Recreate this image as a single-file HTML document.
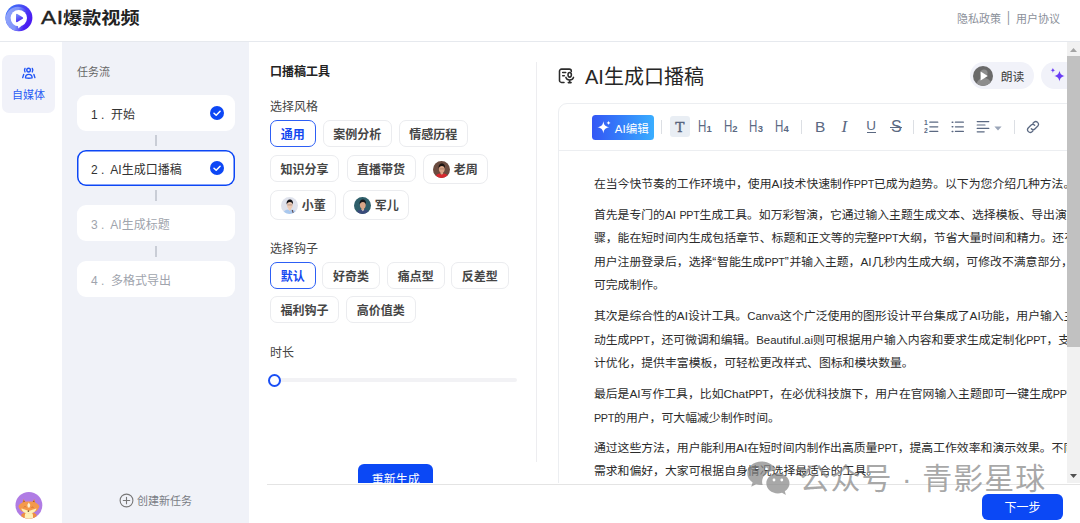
<!DOCTYPE html>
<html lang="zh-CN">
<head>
<meta charset="utf-8">
<title>AI爆款视频</title>
<style>
*{box-sizing:border-box;margin:0;padding:0}
html,body{width:1080px;height:523px;overflow:hidden;background:#fff}
body{position:relative;font-family:"Liberation Sans","Noto Sans CJK SC",sans-serif;color:#333;font-size:12px}
.abs{position:absolute}
.t{position:absolute;white-space:nowrap;line-height:1}
/* header */
#hdr{position:absolute;left:0;top:0;width:1080px;height:42px;background:#fff;border-bottom:1px solid #e6e9ee}
#brand{left:40.5px;top:8px;font-size:16.5px;font-weight:700;color:#222;line-height:20px}
#brand .ai{display:inline-block;font-weight:400;-webkit-text-stroke:.35px #222;font-size:17.5px;transform:scaleX(1.3);transform-origin:0 50%;width:22.5px;letter-spacing:.5px}
#brand .cn{display:inline-block;transform:scaleX(1.16);transform-origin:0 50%}
#links{right:20px;top:13px;font-size:11px;color:#8b909a;line-height:12px}
/* left rail */
#rail{position:absolute;left:0;top:42px;width:62px;height:481px;background:#fff}
#tab{position:absolute;left:2px;top:55px;width:53px;height:58px;background:#f1f2f9;border-radius:7px}
#tabtxt{left:2px;width:53px;text-align:center;top:89px;font-size:11px;color:#2b5df5;line-height:12px}
/* task panel */
#tasks{position:absolute;left:62px;top:42px;width:187px;height:481px;background:#f0f2f8}
.task{position:absolute;left:77px;width:158px;height:36px;background:#fff;border-radius:9px;font-size:12px;line-height:40px;padding-left:14px;color:#333;white-space:nowrap}
.task.cur{box-shadow:inset 0 0 0 1.5px #0d47f5}
.task.dim{color:#a0a4ad}
.conn{position:absolute;left:155px;width:2px;height:11px;background:#c9cdd6}
.chk{position:absolute;width:14px;height:14px}
/* tool panel */
#tool{position:absolute;left:249px;top:42px;width:288px;height:481px;background:#fff}
.lbl{font-size:12px;color:#444;line-height:14px}
.chip{position:absolute;height:27px;overflow:visible;border:1px solid #ebecef;border-radius:7px;background:#fff;font-size:12px;font-weight:700;color:#454545;line-height:29px;text-align:center;white-space:nowrap}
.chip.sel{border-color:#2d5ff5;color:#1448f0}
.chip.av{height:29.5px;line-height:29px;text-align:left;border-radius:8px}
.chip.av svg{position:absolute;left:9.500px;top:5.800px;width:17px;height:17px}
.chip.av span{position:absolute;left:30.300px;top:.6px}
/* editor */
#card{position:absolute;left:558px;top:103px;width:540px;height:420px;border:1px solid #eceef1;border-radius:9px 0 0 0;background:#fff}
.para{position:absolute;left:593.9px;font-size:11.85px;color:#2b2b2b;white-space:nowrap;line-height:23.6px}
.lp{font-size:10.8px;letter-spacing:-.27px}.lq{letter-spacing:.8px}.la{font-size:11.8px}.lc{font-size:11.4px;letter-spacing:0}.lb{font-size:11.4px;letter-spacing:.04px}
.tb{position:absolute;color:#5b6982}
.hh{top:119.400px;font-size:15.600px;line-height:16px}
.hh b{display:inline-block;font-weight:400;transform:scaleX(.74);transform-origin:0 50%;width:9.200px}
.hh sub{font-size:9.500px;vertical-align:baseline;font-weight:700;margin-left:-.8px}
.sep{position:absolute;width:1px;height:14px;top:120px;background:#dcdfe4}
/* scrollbar */
#sb{position:absolute;left:1067px;top:42px;width:13px;height:442px;background:#f1f1f1}
#sbthumb{position:absolute;left:0;top:14px;width:13px;height:290.500px;background:#c1c1c1}
/* footer */
#foot{position:absolute;left:267px;top:483px;width:813px;height:40px;background:#fff;box-shadow:inset 0 1px 0 #fff,inset 0 2px 0 #e4e4e4}
#next{position:absolute;left:982px;top:494px;width:81px;height:26px;border-radius:6px;background:#0b48f5;color:#fff;font-size:12px;text-align:center;line-height:28.500px}
#regen{position:absolute;left:358.300px;top:464px;width:74.800px;height:30px;border-radius:6px;background:#0b48f5;color:#fff;font-size:12px;text-align:center;line-height:33px}
#wm{position:absolute;left:799.500px;top:461.500px;font-size:30px;color:rgba(135,135,135,.72);white-space:nowrap;line-height:34px;letter-spacing:1px;font-weight:400}
</style>
</head>
<body>
<!-- HEADER -->
<div id="hdr"></div>
<svg class="abs" style="left:5px;top:4px" width="28" height="28" viewBox="0 0 28 28">
  <defs>
    <linearGradient id="lg1" x1="0.1" y1="0.1" x2="0.9" y2="0.6"><stop offset="0" stop-color="#3f74f8"/><stop offset="0.5" stop-color="#4748f5"/><stop offset="1" stop-color="#4b1cf2"/></linearGradient>
    <linearGradient id="lg3" x1="0" y1="0.4" x2="1" y2="0.6"><stop offset="0" stop-color="#8fa3fb"/><stop offset="0.45" stop-color="#8094f9"/><stop offset="0.8" stop-color="#6f7af8" stop-opacity="0"/></linearGradient>
    <linearGradient id="lg2" x1="0.2" y1="0" x2="0.6" y2="1"><stop offset="0" stop-color="#7386f9"/><stop offset="1" stop-color="#4527f3"/></linearGradient>
    <clipPath id="lgc"><circle cx="13.900" cy="13.800" r="13.500"/></clipPath>
  </defs>
  <circle cx="13.900" cy="13.800" r="13.500" fill="url(#lg1)"/>
  <g clip-path="url(#lgc)"><circle cx="12.800" cy="14.900" r="12.200" fill="url(#lg3)"/></g>
  <circle cx="13.800" cy="14.100" r="8.200" fill="#fff"/>
  <path d="M13 22.100l0.300 2.500l3-2.600z" fill="#fff"/>
  <path d="M11.900 10.800v6.500l5.300-3.250z" fill="url(#lg2)" stroke="url(#lg2)" stroke-width="1.800" stroke-linejoin="round"/>
</svg>
<div id="brand" class="t"><span class="ai">AI</span><span class="cn">爆款视频</span></div>
<div id="links" class="t">隐私政策 &nbsp;<span style="display:inline-block;transform:scaleY(1.25) translateY(-1.3px)">|</span>&nbsp; 用户协议</div>

<!-- LEFT RAIL -->
<div id="rail"></div>
<div id="tab"></div>
<svg class="abs" style="left:21px;top:66px" width="15" height="14" viewBox="0 0 15 14" fill="none" stroke="#2457f5" stroke-width="1.400" stroke-linecap="round" stroke-linejoin="round">
  <circle cx="7.600" cy="4.100" r="1.850"/>
  <path d="M4 2.400c-0.650 1.050-0.650 2.450 0 3.500M11.300 2.400c0.650 1.050 0.650 2.450 0 3.500"/>
  <path d="M4.500 11.800c0-2.300 1.500-3.400 3.300-3.400s3.300 1.100 3.300 3.400c-2.100 0.600-4.500 0.600-6.600 0z"/>
  <path d="M2.700 8.500L1.700 11.600M12.900 8.500L13.900 11.600"/>
</svg>
<div id="tabtxt" class="t">自媒体</div>

<!-- TASK PANEL -->
<div id="tasks"></div>
<div class="t" style="left:77px;top:66px;font-size:11px;color:#666;line-height:12px">任务流</div>
<div class="task" style="top:94.5px">1 .&nbsp; 开始</div>
<div class="conn" style="top:135px"></div>
<div class="task cur" style="top:150px">2 .&nbsp; AI生成口播稿</div>
<div class="conn" style="top:190px"></div>
<div class="task dim" style="top:205px">3 .&nbsp; AI生成标题</div>
<div class="conn" style="top:246px"></div>
<div class="task dim" style="top:261px">4 .&nbsp; 多格式导出</div>
<svg class="chk" style="left:210px;top:106px" viewBox="0 0 14 14"><circle cx="7" cy="7" r="7" fill="#0d47f5"/><path d="M4 7.2l2.2 2.1L10.1 5.2" fill="none" stroke="#fff" stroke-width="1.5" stroke-linecap="round" stroke-linejoin="round"/></svg>
<svg class="chk" style="left:210px;top:161px" viewBox="0 0 14 14"><circle cx="7" cy="7" r="7" fill="#0d47f5"/><path d="M4 7.2l2.2 2.1L10.1 5.2" fill="none" stroke="#fff" stroke-width="1.5" stroke-linecap="round" stroke-linejoin="round"/></svg>
<svg class="abs" style="left:119px;top:493px" width="15" height="15" viewBox="0 0 15 15" fill="none" stroke="#777" stroke-width="1.1" stroke-linecap="round"><circle cx="7.5" cy="7.5" r="6.4"/><path d="M7.5 4.3v6.4M4.3 7.5h6.4"/></svg>
<div class="t" style="left:137px;top:495px;font-size:11px;color:#7a7d85;line-height:12px">创建新任务</div>
<!-- bottom-left avatar -->
<svg class="abs" style="left:15px;top:491px" width="28" height="29" viewBox="0 0 28 29">
  <defs><clipPath id="avc"><circle cx="13.900" cy="14.300" r="13.400"/></clipPath></defs>
  <circle cx="13.900" cy="14.300" r="13.400" fill="#b07ce4"/>
  <g clip-path="url(#avc)">
    <path d="M6.400 23.500c1.200-1.600 3.600-2.300 7.500-2.300s6.300 0.700 7.500 2.300l0.600 6H5.800z" fill="#ee8f42"/>
    <path d="M10.200 22.500c1.200-0.900 6.200-0.900 7.400 0c0.600 2 0.600 4.500 0 7h-7.400c-0.600-2.500-0.600-5 0-7z" fill="#fdf0b8"/>
    <path d="M7.200 12.800l1.300-4.900l2.500 3.500z M20.600 12.800l-1.300-4.700l-2.500 3.300z" fill="#ef8c3e"/>
    <path d="M8.300 11.600l0.500-2.300l1.100 1.600z M19.500 11.600l-0.500-2.200l-1.100 1.500z" fill="#8a4a24"/>
    <path d="M3.400 15.400c1.200-3.400 5.200-5 10.500-5s9.300 1.600 10.500 5c-0.600 1.500-1.200 3-2.400 4.200c-2 1.900-5 2.600-8.100 2.600s-6.100-0.700-8.100-2.600c-1.200-1.200-1.800-2.700-2.400-4.200z" fill="#f4994b"/>
    <path d="M6.300 17.400c1.800 0.300 4.800 1.700 7.600 2.500c2.800-0.800 5.800-2.200 7.600-2.500c-0.600 3-3.800 5.200-7.600 5.200s-7-2.200-7.600-5.200z" fill="#fdf0b8"/>
    <path d="M13.800 11.500l1.500 2.500l-0.700 2.600h-1.700l-0.600-2.600z" fill="#fdf3d6"/>
    <path d="M9 16.100c0.400-1 1.600-1 2 0M16.500 16.700c0.400-1 1.600-1 2 0" stroke="#c96a2a" stroke-width="0.600" fill="none" stroke-linecap="round"/>
    <ellipse cx="13.400" cy="20.200" rx="0.800" ry="0.600" fill="#5a2e18"/>
  </g>
</svg>

<!-- TOOL PANEL -->
<div id="tool"></div>
<div class="abs" style="left:536px;top:62px;width:1px;height:400px;background:#ededf0"></div>
<div class="t" style="left:270px;top:64.500px;font-size:12px;font-weight:700;color:#222;line-height:14px">口播稿工具</div>
<div class="t lbl" style="left:270px;top:100px">选择风格</div>
<div class="chip sel" style="left:270px;top:120px;width:45.500px">通用</div>
<div class="chip" style="left:323px;top:120px;width:68.500px">案例分析</div>
<div class="chip" style="left:399px;top:120px;width:68.500px">情感历程</div>
<div class="chip" style="left:270px;top:155px;width:69px">知识分享</div>
<div class="chip" style="left:346.5px;top:155px;width:69px">直播带货</div>
<div class="chip av" style="left:422.5px;top:154px;width:65.500px">
  <svg viewBox="0 0 17 17"><defs><clipPath id="c1"><circle cx="8.500" cy="8.500" r="8.500"/></clipPath></defs><g clip-path="url(#c1)"><rect width="17" height="17" fill="#6b4b3f"/><path d="M2.200 17.500c0.200-3.200 2-4.500 4.300-5l2.300 0.900l2.300-0.900c2.300 0.500 4.100 1.800 4.300 5z" fill="#d6282e"/><path d="M7.500 10.500h2.600v2.200l-1.300 1.100l-1.300-1.100z" fill="#dba587"/><ellipse cx="8.800" cy="7.900" rx="2.900" ry="3.600" fill="#dba587"/><path d="M5.700 7.600c-0.500-3.400 1.200-5 3.200-5s3.600 1.500 3 5c-0.500-1.700-1.300-2.500-3-2.600c-1.700 0.100-2.600 0.900-3.200 2.600z" fill="#1d1512"/><path d="M6.400 7.900h4.800" stroke="#3a2a28" stroke-width="0.500" opacity=".6"/></g></svg>
  <span>老周</span></div>
<div class="chip av" style="left:270.4px;top:190px;width:65.600px">
  <svg viewBox="0 0 17 17"><defs><clipPath id="c2"><circle cx="8.500" cy="8.500" r="8.500"/></clipPath></defs><g clip-path="url(#c2)"><rect width="17" height="17" fill="#dfe2ec"/><path d="M2.200 17.500c0.200-3.200 2-4.500 4.300-5l2.300 0.900l2.300-0.900c2.300 0.500 4.100 1.800 4.300 5z" fill="#a9c8ee"/><path d="M7.500 10.500h2.600v2.200l-1.300 1.100l-1.300-1.100z" fill="#edcbb6"/><ellipse cx="8.800" cy="7.900" rx="2.900" ry="3.600" fill="#edcbb6"/><path d="M5.700 7.600c-0.500-3.400 1.200-5 3.200-5s3.600 1.500 3 5c-0.500-1.700-1.300-2.500-3-2.600c-1.700 0.100-2.600 0.900-3.200 2.600z" fill="#17171c"/><path d="M6.400 7.900h4.800" stroke="#3a2a28" stroke-width="0.500" opacity=".6"/><path d="M11.200 13l1.600 4.500" stroke="#5b3d3d" stroke-width="1"/></g></svg>
  <span>小董</span></div>
<div class="chip av" style="left:343.4px;top:190px;width:65.600px">
  <svg viewBox="0 0 17 17"><defs><clipPath id="c3"><circle cx="8.500" cy="8.500" r="8.500"/></clipPath></defs><g clip-path="url(#c3)"><rect width="17" height="17" fill="#2f5f6a"/><path d="M2.200 17.500c0.200-3.200 2-4.500 4.300-5l2.300 0.900l2.300-0.900c2.300 0.500 4.100 1.800 4.300 5z" fill="#3a4b7b"/><path d="M7.500 10.500h2.600v2.200l-1.300 1.100l-1.300-1.100z" fill="#d9a688"/><ellipse cx="8.800" cy="7.900" rx="2.900" ry="3.600" fill="#d9a688"/><path d="M5.700 7.600c-0.500-3.400 1.200-5 3.200-5s3.600 1.500 3 5c-0.500-1.700-1.300-2.500-3-2.600c-1.700 0.100-2.600 0.900-3.200 2.600z" fill="#15181c"/><path d="M7.600 12.700l1.200 1.100l1.200-1.100" stroke="#dfe5ee" stroke-width="0.600" fill="none"/></g></svg>
  <span>军儿</span></div>
<div class="t lbl" style="left:270px;top:241.800px">选择钩子</div>
<div class="chip sel" style="left:270px;top:262px;width:45.500px">默认</div>
<div class="chip" style="left:322.200px;top:262px;width:57.800px">好奇类</div>
<div class="chip" style="left:387px;top:262px;width:57.500px">痛点型</div>
<div class="chip" style="left:451px;top:262px;width:57.500px">反差型</div>
<div class="chip" style="left:270px;top:296px;width:69px">福利钩子</div>
<div class="chip" style="left:346px;top:296px;width:69.500px">高价值类</div>
<div class="t lbl" style="left:270px;top:346px">时长</div>
<div class="abs" style="left:274px;top:378px;width:243px;height:4px;border-radius:2px;background:#f2f2f5"></div>
<div class="abs" style="left:267.500px;top:373.500px;width:13px;height:13px;border-radius:50%;border:2px solid #1a4ff5;background:#fff"></div>
<div id="regen">重新生成</div>

<!-- EDITOR -->
<svg class="abs" style="left:557px;top:67px" width="19" height="18" viewBox="0 0 19 18" fill="none" stroke="#2b2b2b" stroke-width="1.55" stroke-linecap="round" stroke-linejoin="round">
  <path d="M7 15.400H4.500a2 2 0 0 1-2-2V4.100a2 2 0 0 1 2-2h7.800a2 2 0 0 1 2 2v0.300"/>
  <path d="M5.700 5.400h3M5.700 8.800h1.600"/>
  <ellipse cx="12.700" cy="7.800" rx="1.700" ry="2.300"/>
  <path d="M8.900 10.400c0.500 1.700 2 2.700 3.800 2.700s3.300-1 3.800-2.700M12.700 13.100v2.400M11.300 15.600h2.800"/>
</svg>
<div class="t" style="left:585px;top:65px;font-size:20px;color:#262626;line-height:24px">AI生成口播稿</div>
<div class="abs" style="left:970px;top:62px;width:64px;height:27px;border-radius:14px;background:#f1f2f9"></div>
<svg class="abs" style="left:973px;top:65.500px" width="20" height="20" viewBox="0 0 20 20"><defs><clipPath id="pc"><circle cx="10" cy="10" r="10"/></clipPath></defs><circle cx="10" cy="10" r="10" fill="#6a6a6a"/><g clip-path="url(#pc)" fill="#8d8d8d"><circle cx="11" cy="7" r="3.600"/><path d="M3.500 20c0-5 3-8 7.500-8s7.500 3 7.500 8z"/></g><path d="M7.600 5.600v8.800l7.200-4.400z" fill="#fff"/></svg>
<div class="t" style="left:1000.800px;top:70.700px;font-size:11.800px;color:#3c3c3c;line-height:13px">朗读</div>
<div class="abs" style="left:1041px;top:62px;width:60px;height:27px;border-radius:14px;background:#f1f2f9"></div>
<svg class="abs" style="left:1049.300px;top:67.400px" width="17.300" height="16.200" viewBox="0 0 16 15" fill="#6a3cf5"><path d="M9.700 3.200c0.500 3 1.700 4.400 4.900 5.100c-3.200 0.700-4.400 2.100-4.900 5.100c-0.500-3-1.700-4.400-4.900-5.100c3.200-0.700 4.400-2.100 4.900-5.100z"/><path d="M3.600 0.700c0.250 1.500 0.800 2.100 2.300 2.400c-1.500 0.300-2.050 0.900-2.300 2.400c-0.250-1.500-0.800-2.100-2.300-2.400c1.500-0.300 2.050-0.900 2.300-2.400z"/></svg>

<div id="card"></div>
<div class="abs" style="left:559px;top:150px;width:520px;height:1px;background:#eceef1"></div>
<!-- toolbar -->
<div class="abs" style="left:592.300px;top:114.500px;width:61.800px;height:25px;border-radius:3.500px;background:linear-gradient(90deg,#3457f5 0%,#3480fa 50%,#3aaeff 100%)"></div>
<svg class="abs" style="left:596.400px;top:119.300px" width="16.500" height="16.500" viewBox="0 0 15 15" fill="#fff"><path d="M6.700 2.100c0.500 3.400 1.800 4.900 5.400 5.500c-3.600 0.600-4.900 2.100-5.400 5.500c-0.500-3.400-1.800-4.900-5.400-5.500c3.600-0.600 4.900-2.100 5.400-5.500z"/><path d="M11.400 1.700c0.220 1.200 0.650 1.650 1.900 1.900c-1.250 0.250-1.680 0.700-1.900 1.900c-0.220-1.200-0.650-1.650-1.900-1.900c1.250-0.250 1.680-0.700 1.900-1.900z"/></svg>
<div class="t" style="left:614.800px;top:123.300px;font-size:11.500px;color:#fff;line-height:13px">AI编辑</div>
<div class="sep" style="left:661px"></div>
<div class="abs" style="left:669.500px;top:116px;width:20.500px;height:21px;border-radius:3px;background:#e9eef4"></div>
<div class="t tb" style="left:675.200px;top:118.700px;font-family:'DejaVu Serif','Liberation Serif',serif;font-size:13.800px;line-height:17px;color:#56647c;-webkit-text-stroke:.4px #56647c">T</div>
<div class="t tb hh" style="left:698.200px"><b>H</b><sub>1</sub></div>
<div class="t tb hh" style="left:723.800px"><b>H</b><sub>2</sub></div>
<div class="t tb hh" style="left:749.400px"><b>H</b><sub>3</sub></div>
<div class="t tb hh" style="left:775px"><b>H</b><sub>4</sub></div>
<div class="sep" style="left:801px"></div>
<div class="t tb" style="left:815px;top:118.800px;font-size:15.500px;line-height:16px">B</div>
<div class="t tb" style="left:841.500px;top:119px;font-size:17px;line-height:16px;font-family:'Liberation Serif',serif;font-style:italic">I</div>
<div class="t tb" style="left:866.200px;top:118px;font-size:13.500px;line-height:16px">U</div>
<div class="abs" style="left:866.500px;top:132px;width:9px;height:1px;background:#5b6982"></div>
<div class="t tb" style="left:891px;top:118.500px;font-size:16px;line-height:16px">S</div>
<div class="abs" style="left:890px;top:126.500px;width:11.500px;height:1px;background:#5b6982"></div>
<div class="sep" style="left:913px"></div>
<svg class="abs" style="left:924px;top:120px" width="16" height="14" viewBox="0 0 16 14" fill="none" stroke="#5b6982" stroke-width="1.2" stroke-linecap="round"><path d="M5.800 2.200h8M5.800 6.800h8M5.800 11.400h8"/><text x="0" y="5.300" font-family="Liberation Sans, sans-serif" font-size="6.800" font-weight="700" fill="#5b6982" stroke="none">1</text><text x="0" y="13.200" font-family="Liberation Sans, sans-serif" font-size="6.800" font-weight="700" fill="#5b6982" stroke="none">2</text></svg>
<svg class="abs" style="left:951px;top:120px" width="14" height="14" viewBox="0 0 14 14" fill="none" stroke="#5b6982" stroke-width="1.200" stroke-linecap="round"><path d="M4.400 2.200h8M4.400 6.800h8M4.400 11.400h8"/><path d="M1.200 2.200h0.600M1.200 6.800h0.600M1.200 11.400h0.600" stroke-width="1.500"/></svg>
<svg class="abs" style="left:976px;top:120px" width="14" height="14" viewBox="0 0 14 14" fill="none" stroke="#5b6982" stroke-width="1.200" stroke-linecap="round"><path d="M1.200 1.600h11.600M1.200 5h7.800M1.200 8.400h11.600M1.200 11.800h7"/></svg>
<svg class="abs" style="left:994px;top:125.500px" width="8" height="5" viewBox="0 0 8 5"><path d="M0.400 0.400h7.200l-3.600 4z" fill="#9aa5b8"/></svg>
<div class="sep" style="left:1014px"></div>
<svg class="abs" style="left:1026px;top:119.500px" width="14" height="14" viewBox="0 0 14 14" fill="none" stroke="#5b6982" stroke-width="1.300" stroke-linecap="round" stroke-linejoin="round"><path d="M5.300 8.700a2.700 2.700 0 0 0 3.800 0l2.700-2.700a2.700 2.700 0 0 0-3.800-3.800l-1 1"/><path d="M8.700 5.300a2.700 2.700 0 0 0-3.800 0l-2.700 2.700a2.700 2.700 0 0 0 3.800 3.800l1-1"/></svg>

<!-- paragraphs -->
<div class="para" style="top:173px">在当今快节奏的工作环境中，使用<span class="la">AI</span>技术快速制作<span class="lp">PPT</span>已成为趋势。以下为您介绍几种方法。</div>
<div class="para" style="top:203.5px">首先是专门的<span class="la">AI</span> <span class="lp">PPT</span>生成工具。如万彩智演，它通过输入主题生成文本、选择模板、导出演示等步<br>骤，能在短时间内生成包括章节、标题和正文等的完整<span class="lp">PPT</span>大纲，节省大量时间和精力。还有爱设计，<br>用户注册登录后，选择<span class="lq">“</span>智能生成<span class="lp">PPT</span><span class="lq">”</span>并输入主题，<span class="la">AI</span>几秒内生成大纲，可修改不满意部分，再选模板即<br>可完成制作。</div>
<div class="para" style="top:305px">其次是综合性的<span class="la">AI</span>设计工具。<span class="lc">Canva</span>这个广泛使用的图形设计平台集成了<span class="la">AI</span>功能，用户输入主题即可自<br>动生成<span class="lp">PPT</span>，还可微调和编辑。<span class="lb">Beautiful.ai</span>则可根据用户输入内容和要求生成定制化<span class="lp">PPT</span>，支持设<br>计优化，提供丰富模板，可轻松更改样式、图标和模块数量。</div>
<div class="para" style="top:383px">最后是<span class="la">AI</span>写作工具，比如<span class="la">Chat</span><span class="lp">PPT</span>，在必优科技旗下，用户在官网输入主题即可一键生成<span class="lp">PPT</span>，适合急需<br><span class="lp">PPT</span>的用户，可大幅减少制作时间。</div>
<div class="para" style="top:436.5px">通过这些方法，用户能利用<span class="la">AI</span>在短时间内制作出高质量<span class="lp">PPT</span>，提高工作效率和演示效果。不同工具有不同<br>需求和偏好，大家可根据自身情况选择最适合的工具。</div>

<!-- scrollbar -->
<div id="sb"><div id="sbthumb"></div>
<svg class="abs" style="left:3px;top:5.500px" width="7" height="4" viewBox="0 0 7 4"><path d="M0 4h7L3.500 0z" fill="#a3a3a3"/></svg>
<svg class="abs" style="left:3px;top:432px" width="7" height="4" viewBox="0 0 7 4"><path d="M0 0h7L3.500 4z" fill="#505050"/></svg>
</div>

<!-- footer -->
<div id="foot"></div>
<div id="next">下一步</div>
<!-- watermark -->
<svg class="abs" style="left:746px;top:460px" width="45" height="37" viewBox="0 0 45 37"><g fill="rgba(135,135,135,.72)" fill-rule="evenodd"><path d="M15.500 1.500C7.500 1.500 1.300 6.800 1.300 13.300c0 3.700 2 7 5.300 9.200l-1.400 4.300l4.900-2.500c1.700 0.500 3.500 0.800 5.400 0.800l1.200-0.040c-0.400-1.100-0.600-2.200-0.600-3.400c0-6 5.800-10.800 12.800-10.800l1 0.040C28.600 5.500 22.600 1.500 15.500 1.500z M10.600 7.600a1.700 1.700 0 1 0 0 3.400a1.700 1.700 0 0 0 0-3.400z M20.200 7.600a1.700 1.700 0 1 0 0 3.400a1.700 1.700 0 0 0 0-3.400z"/><path d="M43.500 23.300c0-5.600-5.200-10.100-11.600-10.100s-11.600 4.500-11.600 10.100s5.200 10.100 11.600 10.100c1.400 0 2.800-0.200 4.100-0.600l3.900 2.200l-1.100-3.700c2.900-1.800 4.700-4.700 4.700-8z M28 18.600a1.400 1.400 0 1 0 0 2.800a1.400 1.400 0 0 0 0-2.800z M35.800 18.600a1.400 1.400 0 1 0 0 2.800a1.400 1.400 0 0 0 0-2.800z"/></g></svg>
<div id="wm">公众号 · 青影星球</div>
</body>
</html>
